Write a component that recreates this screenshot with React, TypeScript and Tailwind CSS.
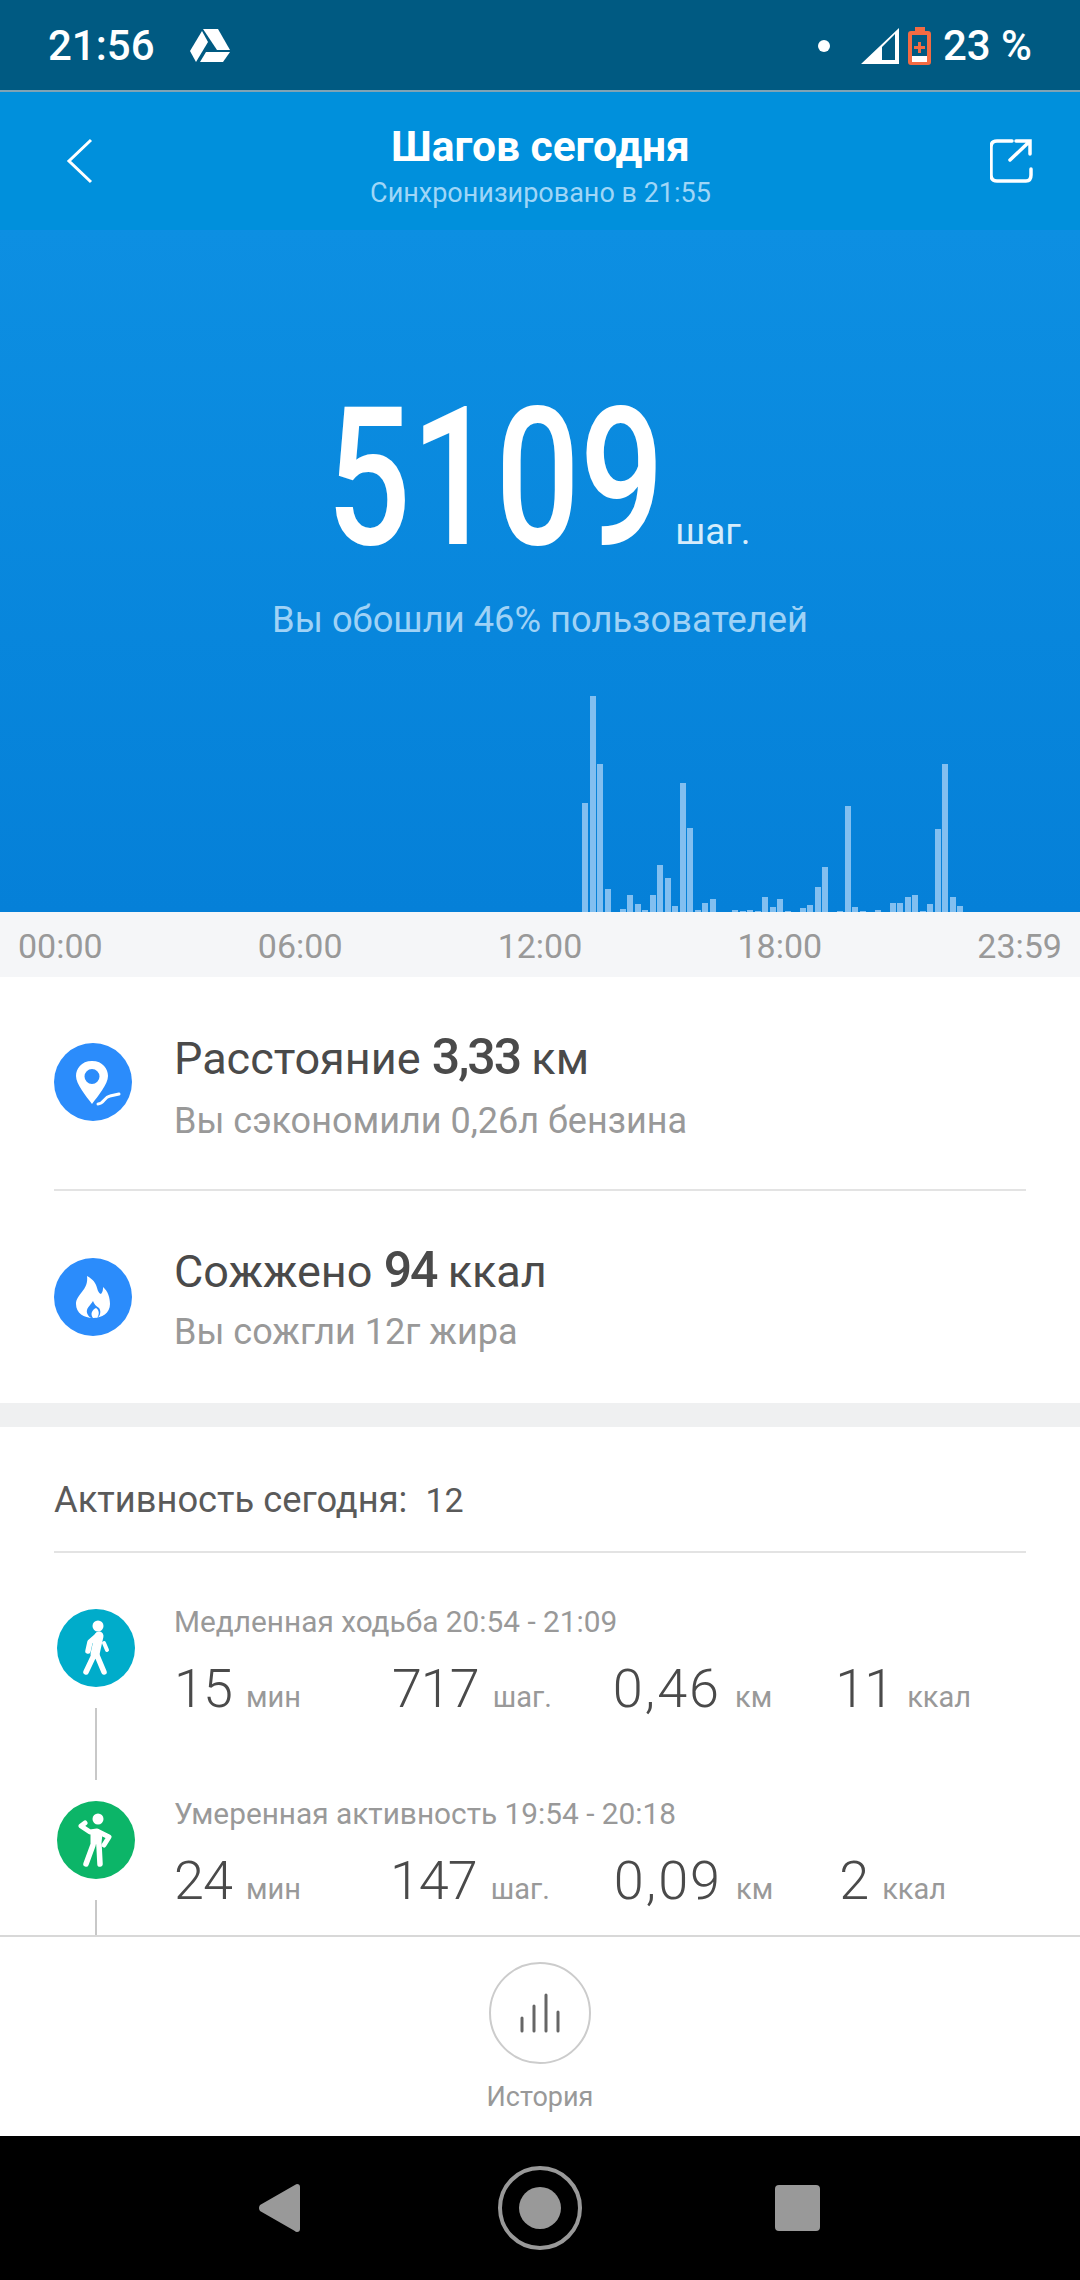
const bars = [
  109, 216, 148, 23, 0, 3, 17, 8, 2, 17, 47, 34, 6, 129, 84, 2, 9, 13, 0, 0, 2, 1, 2, 1, 15, 5, 13, 1, 0, 4, 7, 25, 45, 0, 1,
  106, 5, 1, 0, 2, 0, 9, 9, 15, 17, 1, 8, 83, 148, 15, 6,
];

const activities = [
  {
    title: "Медленная ходьба 20:54 - 21:09",
    color: "bg-[#00acca]",
    kind: "walk",
    time: "15",
    steps: "717",
    km: "0,46",
    kcal: "11",
    gaps: ["ml-[91px]", "ml-[61px]", "ml-[63px]"],
  },
  {
    title: "Умеренная активность 19:54 - 20:18",
    color: "bg-[#0cb568]",
    kind: "stretch",
    time: "24",
    steps: "147",
    km: "0,09",
    kcal: "2",
    gaps: ["ml-[89px]", "ml-[64px]", "ml-[66px]"],
  },
];

function Stat({ value, unit, className, wide }: { value: string; unit: string; className?: string; wide?: boolean }) {
  return (
    <div className={`flex items-baseline ${className ?? ""}`}>
      <span className={`text-[54px] leading-[64px] font-light text-[#4a4a4a] ${wide ? "tracking-[2px]" : "tracking-[-1px]"}`}>{value}</span>
      <span className="ml-[14px] text-[29px] leading-[32px] text-[#999999]">{unit}</span>
    </div>
  );
}

function WalkIcon() {
  return (
    <svg width="78" height="78" viewBox="0 0 78 78" fill="none">
      <circle cx="41" cy="17" r="5.5" fill="#fff" />
      <path d="M41 26 L33 33 L31 42 M41 26 L39 44 L47 63 M38 44 L29 63" stroke="#fff" strokeWidth="5.5" strokeLinecap="round" strokeLinejoin="round" />
      <path d="M42 27 L38 45" stroke="#fff" strokeWidth="9" strokeLinecap="round" />
      <path d="M47 34 L50 41" stroke="#fff" strokeWidth="4" strokeLinecap="round" />
    </svg>
  );
}

function StretchIcon() {
  return (
    <svg width="78" height="78" viewBox="0 0 78 78" fill="none">
      <circle cx="41" cy="18" r="5.5" fill="#fff" />
      <path d="M28 22 L24 25 L33 31 L40 30 L52 36 L47 44" stroke="#fff" strokeWidth="5" strokeLinecap="round" strokeLinejoin="round" />
      <path d="M35 31 L44 32 L43 42 L35 42 Z" fill="#fff" stroke="#fff" strokeWidth="3" strokeLinejoin="round" />
      <path d="M36 44 L29 63 M42 44 L43 63" stroke="#fff" strokeWidth="5.5" strokeLinecap="round" />
    </svg>
  );
}

export default function App() {
  return (
    <div className="flex h-[2280px] w-[1080px] flex-col overflow-hidden bg-white font-['Roboto',sans-serif]">
      {/* status bar */}
      <div className="flex h-[90px] items-center justify-between bg-[#005a82] pl-[48px] pr-[48px] pt-[2px] text-white">
        <div className="flex items-center gap-[34px]">
          <span className="text-[42px] leading-none font-medium">21:56</span>
          <svg width="42" height="36" viewBox="0 0 42 36" fill="#fff">
            <path d="M14 1 H29 L41 22 H28 Z" />
            <path d="M13 3 L19 14 L7 34 L1 23 Z" />
            <path d="M17 24 H41 L34 34 H11 Z" />
          </svg>
        </div>
        <div className="flex items-center">
          <span className="mr-[31px] h-[12px] w-[12px] rounded-full bg-white" />
          <svg width="38" height="36" viewBox="0 0 38 36">
            <path fillRule="evenodd" d="M38 0 V36 H0 Z M34 6 L21 19 V32 H34 Z" fill="#fff" />
          </svg>
          <svg className="ml-[9px]" width="23" height="38" viewBox="0 0 23 38">
            <path d="M7 0 H17 V4 H20 Q23 4 23 7 V35 Q23 38 20 38 H3 Q0 38 0 35 V7 Q0 4 3 4 H7 Z" fill="#f26b43" />
            <rect x="4" y="8" width="15" height="21" fill="#005a82" />
            <rect x="4" y="29" width="15" height="6" fill="#fff" />
            <path d="M10 15 H13 V19 H17 V22 H13 V26 H10 V22 H6 V19 H10 Z" fill="#f26b43" />
          </svg>
          <span className="ml-[12px] text-[42px] leading-none font-medium">23 %</span>
        </div>
      </div>
      <div className="h-[2px] bg-[#7fa3b5]" />

      {/* title bar */}
      <div className="flex h-[138px] items-center justify-between bg-[#0090dc] pl-[66px] pr-[46px]">
        <svg width="28" height="46" viewBox="0 0 28 46" fill="none">
          <path d="M25 2 L3 23 L25 44" stroke="#fff" strokeWidth="3" />
        </svg>
        <div className="flex flex-col items-center pt-[9px] pr-[3px]">
          <span className="text-[42.5px] leading-[50px] font-bold text-white">Шагов сегодня</span>
          <span className="mt-[5px] text-[27px] leading-[32px] text-[#9fd6f7]">Синхронизировано в 21:55</span>
        </div>
        <svg width="44" height="44" viewBox="0 0 44 44" fill="none" stroke="#fff" strokeWidth="3.5" strokeLinecap="round">
          <path d="M22 2 H7 Q1 2 1 8 V36 Q1 42 7 42 H36 Q41 42 41 36 V30" />
          <path d="M20 21 L39 3 M26 2 H40 V15" />
        </svg>
      </div>

      {/* hero */}
      <div className="flex h-[682px] flex-col bg-gradient-to-b from-[#0d8fe2] to-[#0580d8]">
        <div className="mt-[158px] flex items-baseline justify-center pr-[53px]">
          <span className="inline-block scale-x-[0.77] text-[193px] leading-[180px] font-medium text-white">5109</span>
          <span className="-ml-[40px] text-[37px] leading-none text-[#d5ecfb]">шаг.</span>
        </div>
        <p className="mt-[32px] text-center text-[36.3px] leading-[40px] text-[#9fd2f6]">Вы обошли 46% пользователей</p>
        <div className="mt-auto flex h-[216px] items-end gap-[1.5px] pl-[582px]">
          {bars.map((h, i) => (
            <div key={i} className="w-[6px] shrink-0 bg-[#82bff0]" style={{ height: h }} />
          ))}
        </div>
      </div>

      {/* time axis */}
      <div className="flex h-[65px] items-center justify-between bg-[#f5f6f8] px-[18px] pt-[2px] text-[34px] leading-none text-[#999999]">
        <span>00:00</span>
        <span>06:00</span>
        <span>12:00</span>
        <span>18:00</span>
        <span>23:59</span>
      </div>

      {/* distance and calories */}
      <div className="px-[54px]">
        <div className="flex h-[214px] items-center gap-[42px] border-b-2 border-[#e3e3e3] pb-[2px]">
          <div className="flex h-[78px] w-[78px] shrink-0 items-center justify-center rounded-full bg-[#2b8cfb]">
            <svg width="78" height="78" viewBox="0 0 78 78">
              <path fillRule="evenodd" d="M38 18 C27 18 22 26 22 33 C22 41 32 53 38 61 C44 53 54 41 54 33 C54 26 49 18 38 18 Z M38 26 A7.5 7.5 0 1 1 38 41 A7.5 7.5 0 0 1 38 26 Z" fill="#fff" />
              <path d="M44 61 C50 61 50 54 56 53 L65 51" fill="none" stroke="#fff" strokeWidth="3" strokeLinecap="round" />
            </svg>
          </div>
          <div className="flex flex-col pt-[6px]">
            <p className="text-[45px] leading-[56px] text-[#4a4a4a]">
              Расстояние <span className="text-[50px] font-medium tracking-[-2px]">3,33</span> км
            </p>
            <p className="mt-[14px] text-[36px] leading-[40px] text-[#999999]">Вы сэкономили 0,26л бензина</p>
          </div>
        </div>
        <div className="flex h-[212px] items-center gap-[42px]">
          <div className="flex h-[78px] w-[78px] shrink-0 items-center justify-center rounded-full bg-[#2b8cfb]">
            <svg width="78" height="78" viewBox="0 0 78 78">
              <path fillRule="evenodd" d="M33 18 C46 25 41 33 47 36 C49 34 49 31 49 29 C54 33 56 40 56 46 C56 55 48 60 39 60 C30 60 22 55 22 46 C22 36 35 32 33 18 Z M39 43 C36 48 32 50 33 55 C34 58 36 60 39 60 C36 56 38 52 42 50 C45 52 46 56 43 60 C47 58 47 52 45 50 C42 48 40 46 39 43 Z" fill="#fff" />
            </svg>
          </div>
          <div className="flex flex-col">
            <p className="text-[45px] leading-[56px] text-[#4a4a4a]">
              Сожжено <span className="text-[50px] font-medium tracking-[-2px]">94</span> ккал
            </p>
            <p className="mt-[12px] text-[36px] leading-[40px] text-[#999999]">Вы сожгли 12г жира</p>
          </div>
        </div>
      </div>

      <div className="h-[24px] shrink-0 bg-[#eff0f1]" />

      {/* activity list */}
      <div className="min-h-0 flex-1 overflow-hidden">
        <div className="mx-[54px] flex h-[126px] items-center border-b-2 border-[#e3e3e3] pt-[22px] text-[36.3px] leading-none text-[#5a5a5a]">
          <span>Активность сегодня:</span>
          <span className="ml-[18px] text-[34px]">12</span>
        </div>
        <div className="mt-[56px] flex flex-col">
          {activities.map((a) => (
            <div key={a.title} className="flex h-[192px] pl-[57px]">
              <div className="flex w-[78px] shrink-0 flex-col items-center">
                <div className={`h-[78px] w-[78px] rounded-full ${a.color}`}>
                  {a.kind === "walk" ? <WalkIcon /> : <StretchIcon />}
                </div>
                <div className="mt-[21px] h-[72px] w-[2px] bg-[#c8c8c8]" />
              </div>
              <div className="ml-[39px] flex flex-col">
                <p className="-mt-[4px] text-[29.8px] leading-[34px] text-[#999999]">{a.title}</p>
                <div className="mt-[18px] flex">
                  <Stat value={a.time} unit="мин" />
                  <Stat value={a.steps} unit="шаг." className={a.gaps[0]} />
                  <Stat value={a.km} unit="км" className={a.gaps[1]} wide />
                  <Stat value={a.kcal} unit="ккал" className={a.gaps[2]} />
                </div>
              </div>
            </div>
          ))}
        </div>
      </div>

      {/* history button */}
      <div className="flex h-[201px] shrink-0 flex-col items-center border-t-2 border-[#d8d8d8] bg-white pt-[25px]">
        <div className="flex h-[102px] w-[102px] items-center justify-center rounded-full border-2 border-[#cccccc]">
          <svg width="42" height="40" viewBox="0 0 42 40" stroke="#666" strokeWidth="3" strokeLinecap="round">
            <path d="M3 25 V38 M15 13 V38 M27 2 V38 M39 19 V38" />
          </svg>
        </div>
        <span className="mt-[18px] text-[27px] leading-[30px] text-[#999999]">История</span>
      </div>

      {/* navigation bar */}
      <div className="flex h-[144px] shrink-0 items-center bg-black pl-[258px]">
        <svg width="42" height="48" viewBox="0 0 42 48" fill="#999">
          <path d="M39 0 Q42 0 42 3 V45 Q42 48 39 48 Q38 48 36 46.500 L2 27 Q0 24 2 21 L36 1.500 Q38 0 39 0 Z" />
        </svg>
        <div className="ml-[198px] flex h-[84px] w-[84px] items-center justify-center rounded-full border-4 border-[#999999]">
          <div className="h-[42px] w-[42px] rounded-full bg-[#999999]" />
        </div>
        <div className="ml-[193px] h-[46px] w-[45px] rounded-[4px] bg-[#999999]" />
      </div>
    </div>
  );
}
